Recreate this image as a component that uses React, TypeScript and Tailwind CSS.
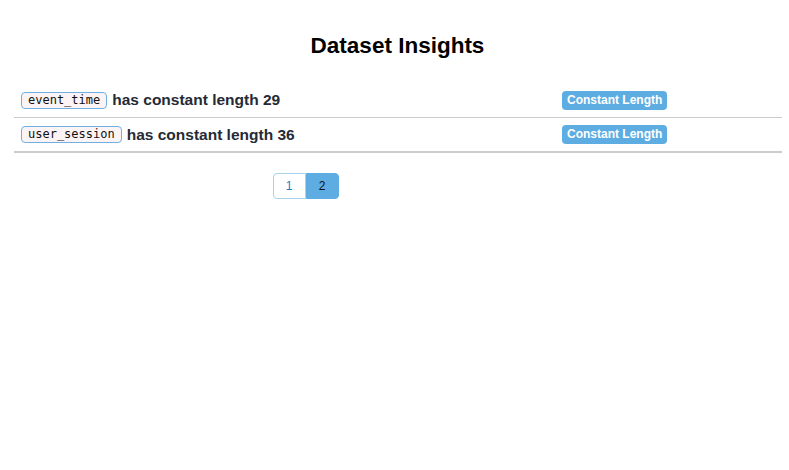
import React from "react";

const rows = [
  { col: "event_time", len: 29 },
  { col: "user_session", len: 36 },
];

export default function App() {
  return (
    <div className="w-[789px] h-[470px] bg-white" style={{ fontFamily: "'Liberation Sans', Arial, sans-serif" }}>
      <h1 className="pt-[33px] pl-[6px] text-center text-[22.5px] leading-[25px] font-bold text-black">Dataset Insights</h1>
      <div className="mx-[14px] mt-[25px] w-[768px]">
        {rows.map((r, i) => (
          <div
            key={r.col}
            className={`grid grid-cols-[548px_1fr] items-center h-[35px] ${i === rows.length - 1 ? "border-b-2" : "border-b"} border-[#cccccc]`}
          >
            <div className="flex items-center pl-[7px]">
              <code
                className="inline-block h-[17px] px-[6px] leading-[15px] text-[12px] text-[#111] bg-[#fcf4f4] border border-[#6fb0e4] rounded-[4px]"
                style={{ fontFamily: "'DejaVu Sans Mono', 'Liberation Mono', monospace" }}
              >
                {r.col}
              </code>
              <span className="ml-[5px] text-[15.5px] font-bold text-[#252a36]">has constant length {r.len}</span>
            </div>
            <div className="flex items-center">
              <span className="inline-block h-[19px] leading-[19px] px-[5px] rounded-[4px] bg-[#5dade2] text-white text-[12px] font-bold">
                Constant Length
              </span>
            </div>
          </div>
        ))}
      </div>
      <div className="mt-[20px] ml-[14px] w-[583px] flex justify-center">
        <button className="w-[33px] h-[26px] text-[12px] text-[#1a7fc1] bg-white border border-[#a9d2ef] rounded-l-[4px]">1</button>
        <button className="w-[33px] h-[26px] text-[12px] text-[#111] bg-[#5dade2] border border-[#5dade2] rounded-r-[4px]">2</button>
      </div>
    </div>
  );
}
